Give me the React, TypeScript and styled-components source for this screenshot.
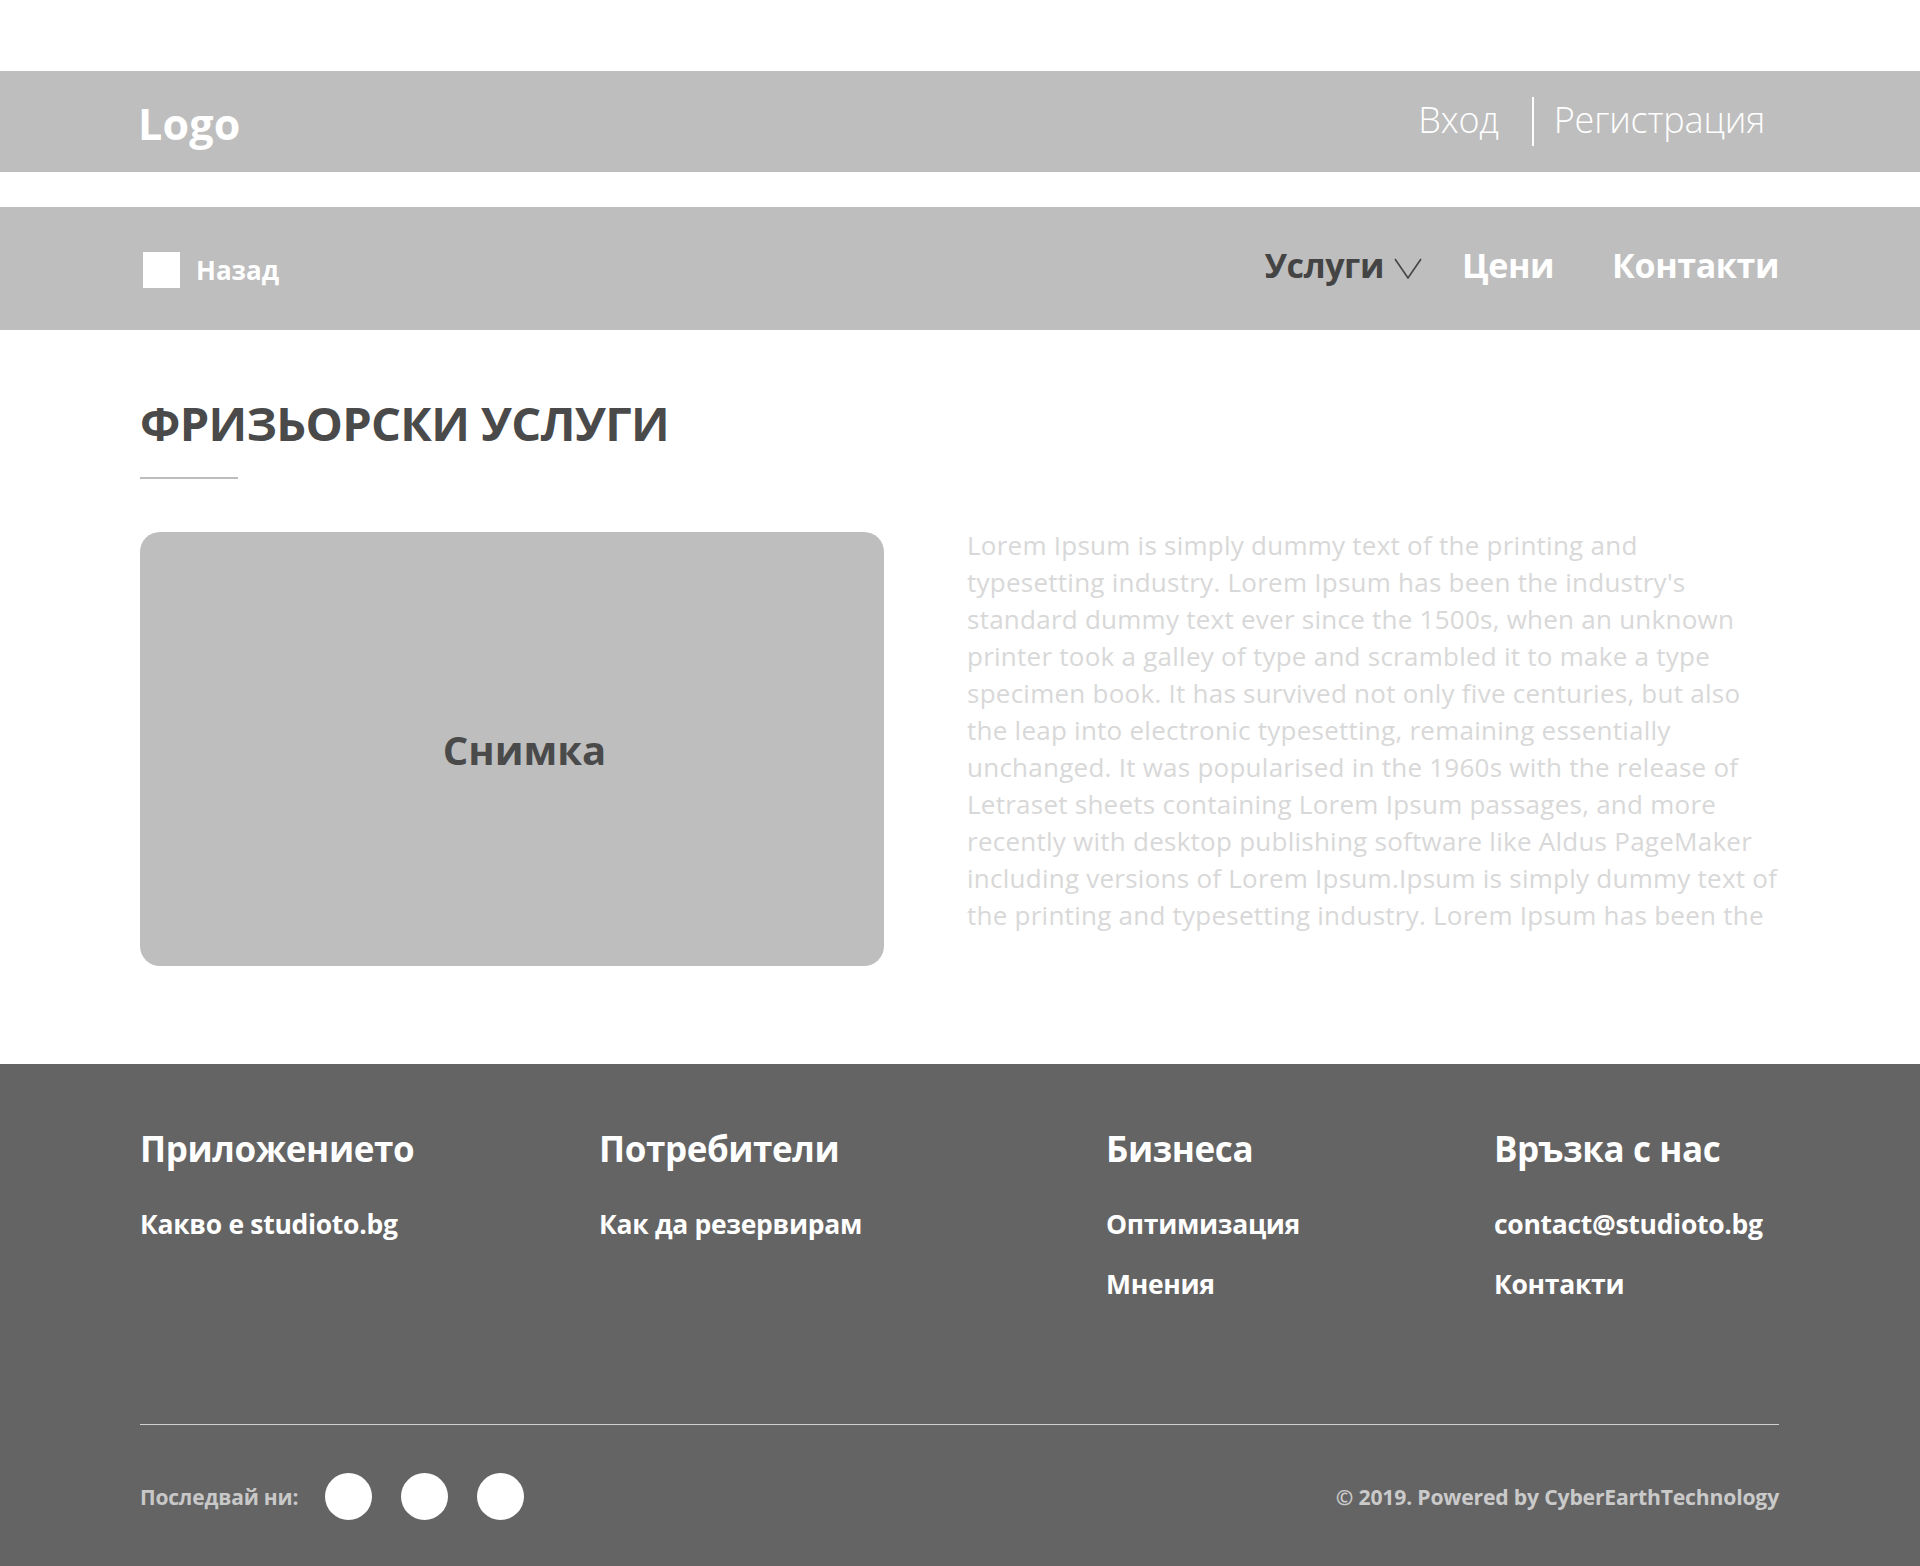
import React from "react";
import styled, { createGlobalStyle } from "styled-components";

const Global = createGlobalStyle`
  html, body { margin: 0; padding: 0; background: #ffffff; }
  body { font-family: "Open Sans", "Noto Sans", sans-serif; }
  * { box-sizing: border-box; }
`;

const Page = styled.div`
  width: 1920px;
  min-height: 1566px;
  display: flex;
  flex-direction: column;
  padding-top: 71px;
  background: #fff;
`;

const TopBar = styled.header`
  height: 101px;
  background: #bebebe;
  display: flex;
  align-items: center;
  justify-content: space-between;
  padding: 0 155px 0 138px;
`;

const Logo = styled.div`
  font-size: 43px;
  font-weight: 700;
  color: #fff;
  letter-spacing: 0.2px;
  margin-top: 4px;
`;

const AuthNav = styled.nav`
  display: flex;
  align-items: center;
  margin-top: -4px;
`;

const AuthLink = styled.a`
  font-size: 36px;
  font-weight: 300;
  color: #fff;
  text-decoration: none;
  letter-spacing: -0.2px;
`;

const AuthDivider = styled.span`
  width: 2px;
  height: 49px;
  background: #fff;
  margin: 4px 20px 0 33px;
`;

const NavBar = styled.nav`
  margin-top: 35px;
  height: 123px;
  background: #bebebe;
  display: flex;
  align-items: center;
  justify-content: space-between;
  padding: 0 141px 0 143px;
`;

const BackLink = styled.a`
  display: flex;
  align-items: center;
  gap: 16px;
  color: #fff;
  font-size: 26px;
  font-weight: 700;
  text-decoration: none;
  margin-top: 2px;
`;

const BackIcon = styled.span`
  width: 37px;
  height: 36px;
  background: #fff;
`;

const MenuList = styled.div`
  display: flex;
  align-items: center;
  gap: 40px;
  margin-top: -7px;
`;

const MenuItem = styled.a<{ $active?: boolean }>`
  display: flex;
  align-items: center;
  gap: 10px;
  font-size: 34px;
  font-weight: 700;
  letter-spacing: -0.4px;
  color: ${(p) => (p.$active ? "#444444" : "#ffffff")};
  text-decoration: none;
  margin-right: ${(p) => (p.$active ? "0" : "18px")};
  &:last-child { margin-right: 0; }
  svg { margin-top: 6px; }
`;

const Main = styled.main`
  padding: 65px 141px 98px 140px;
`;

const Title = styled.h1`
  margin: 0;
  font-size: 47px;
  line-height: 57px;
  font-weight: 700;
  color: #4a4a4a;
  letter-spacing: -0.7px;
`;

const TitleRule = styled.div`
  width: 98px;
  height: 2px;
  background: #bdbdbd;
  margin-top: 25px;
`;

const Content = styled.div`
  margin-top: 53px;
  display: grid;
  grid-template-columns: 744px 1fr;
  column-gap: 83px;
  align-items: start;
`;

const Photo = styled.div`
  height: 434px;
  border-radius: 20px;
  background: #bebebe;
  display: flex;
  align-items: center;
  justify-content: center;
  font-size: 40px;
  font-weight: 700;
  color: #4a4a4a;
  padding-left: 25px;
`;

const Text = styled.p`
  margin: -5px 0 0 0;
  font-size: 26px;
  line-height: 37px;
  color: #d8d8d8;
  letter-spacing: 0.25px;
`;

const TextLine = styled.span`
  display: block;
  white-space: nowrap;
`;

const Footer = styled.footer`
  flex: 1;
  background: #646464;
  padding: 64px 141px 47px 140px;
`;

const FooterCols = styled.div`
  display: grid;
  grid-template-columns: 459px 507px 388px 1fr;
`;

const FooterCol = styled.div`
  display: flex;
  flex-direction: column;
`;

const ColTitle = styled.h3`
  margin: 0 0 39px 0;
  font-size: 35px;
  line-height: 41px;
  font-weight: 700;
  color: #fff;
  letter-spacing: -0.4px;
`;

const ColLink = styled.a`
  font-size: 26.5px;
  line-height: 32px;
  font-weight: 700;
  color: #fff;
  text-decoration: none;
  letter-spacing: -0.3px;
  & + & { margin-top: 28px; }
`;

const FooterRule = styled.div`
  height: 1px;
  background: #d0d0d0;
  margin-top: 124px;
`;

const BottomRow = styled.div`
  margin-top: 48px;
  display: flex;
  align-items: center;
  justify-content: space-between;
`;

const Follow = styled.div`
  display: flex;
  align-items: center;
`;

const FollowLabel = styled.span`
  font-size: 21px;
  font-weight: 700;
  color: #c8c8c8;
  margin-right: 27px;
  letter-spacing: -0.2px;
`;

const Social = styled.a`
  width: 47px;
  height: 47px;
  border-radius: 50%;
  background: #fff;
  & + & { margin-left: 29px; }
`;

const Copy = styled.span`
  font-size: 21.2px;
  font-weight: 700;
  color: #cacaca;
  letter-spacing: -0.2px;
`;

const lines = [
  "Lorem Ipsum is simply dummy text of the printing and",
  "typesetting industry. Lorem Ipsum has been the industry's",
  "standard dummy text ever since the 1500s, when an unknown",
  "printer took a galley of type and scrambled it to make a type",
  "specimen book. It has survived not only five centuries, but also",
  "the leap into electronic typesetting, remaining essentially",
  "unchanged. It was popularised in the 1960s with the release of",
  "Letraset sheets containing Lorem Ipsum passages, and more",
  "recently with desktop publishing software like Aldus PageMaker",
  "including versions of Lorem Ipsum.Ipsum is simply dummy text of",
  "the printing and typesetting industry. Lorem Ipsum has been the",
];

const Chevron = () => (
  <svg width="28" height="21" viewBox="0 0 28 21" fill="none">
    <path d="M1 1 L14 20 L27 1" stroke="#444" strokeWidth="1.6" />
  </svg>
);

export default function App() {
  return (
    <>
      <Global />
      <Page>
        <TopBar>
          <Logo>Logo</Logo>
          <AuthNav>
            <AuthLink href="#">Вход</AuthLink>
            <AuthDivider />
            <AuthLink href="#">Регистрация</AuthLink>
          </AuthNav>
        </TopBar>
        <NavBar>
          <BackLink href="#">
            <BackIcon />
            Назад
          </BackLink>
          <MenuList>
            <MenuItem $active href="#">
              Услуги <Chevron />
            </MenuItem>
            <MenuItem href="#">Цени</MenuItem>
            <MenuItem href="#">Контакти</MenuItem>
          </MenuList>
        </NavBar>
        <Main>
          <Title>ФРИЗЬОРСКИ УСЛУГИ</Title>
          <TitleRule />
          <Content>
            <Photo>Снимка</Photo>
            <Text>
              {lines.map((l, i) => (
                <TextLine key={i}>{l}</TextLine>
              ))}
            </Text>
          </Content>
        </Main>
        <Footer>
          <FooterCols>
            <FooterCol>
              <ColTitle>Приложението</ColTitle>
              <ColLink href="#">Какво е studioto.bg</ColLink>
            </FooterCol>
            <FooterCol>
              <ColTitle>Потребители</ColTitle>
              <ColLink href="#">Как да резервирам</ColLink>
            </FooterCol>
            <FooterCol>
              <ColTitle>Бизнеса</ColTitle>
              <ColLink href="#">Оптимизация</ColLink>
              <ColLink href="#">Мнения</ColLink>
            </FooterCol>
            <FooterCol>
              <ColTitle>Връзка с нас</ColTitle>
              <ColLink href="#">contact@studioto.bg</ColLink>
              <ColLink href="#">Контакти</ColLink>
            </FooterCol>
          </FooterCols>
          <FooterRule />
          <BottomRow>
            <Follow>
              <FollowLabel>Последвай ни:</FollowLabel>
              <Social href="#" />
              <Social href="#" />
              <Social href="#" />
            </Follow>
            <Copy>© 2019. Powered by CyberEarthTechnology</Copy>
          </BottomRow>
        </Footer>
      </Page>
    </>
  );
}
